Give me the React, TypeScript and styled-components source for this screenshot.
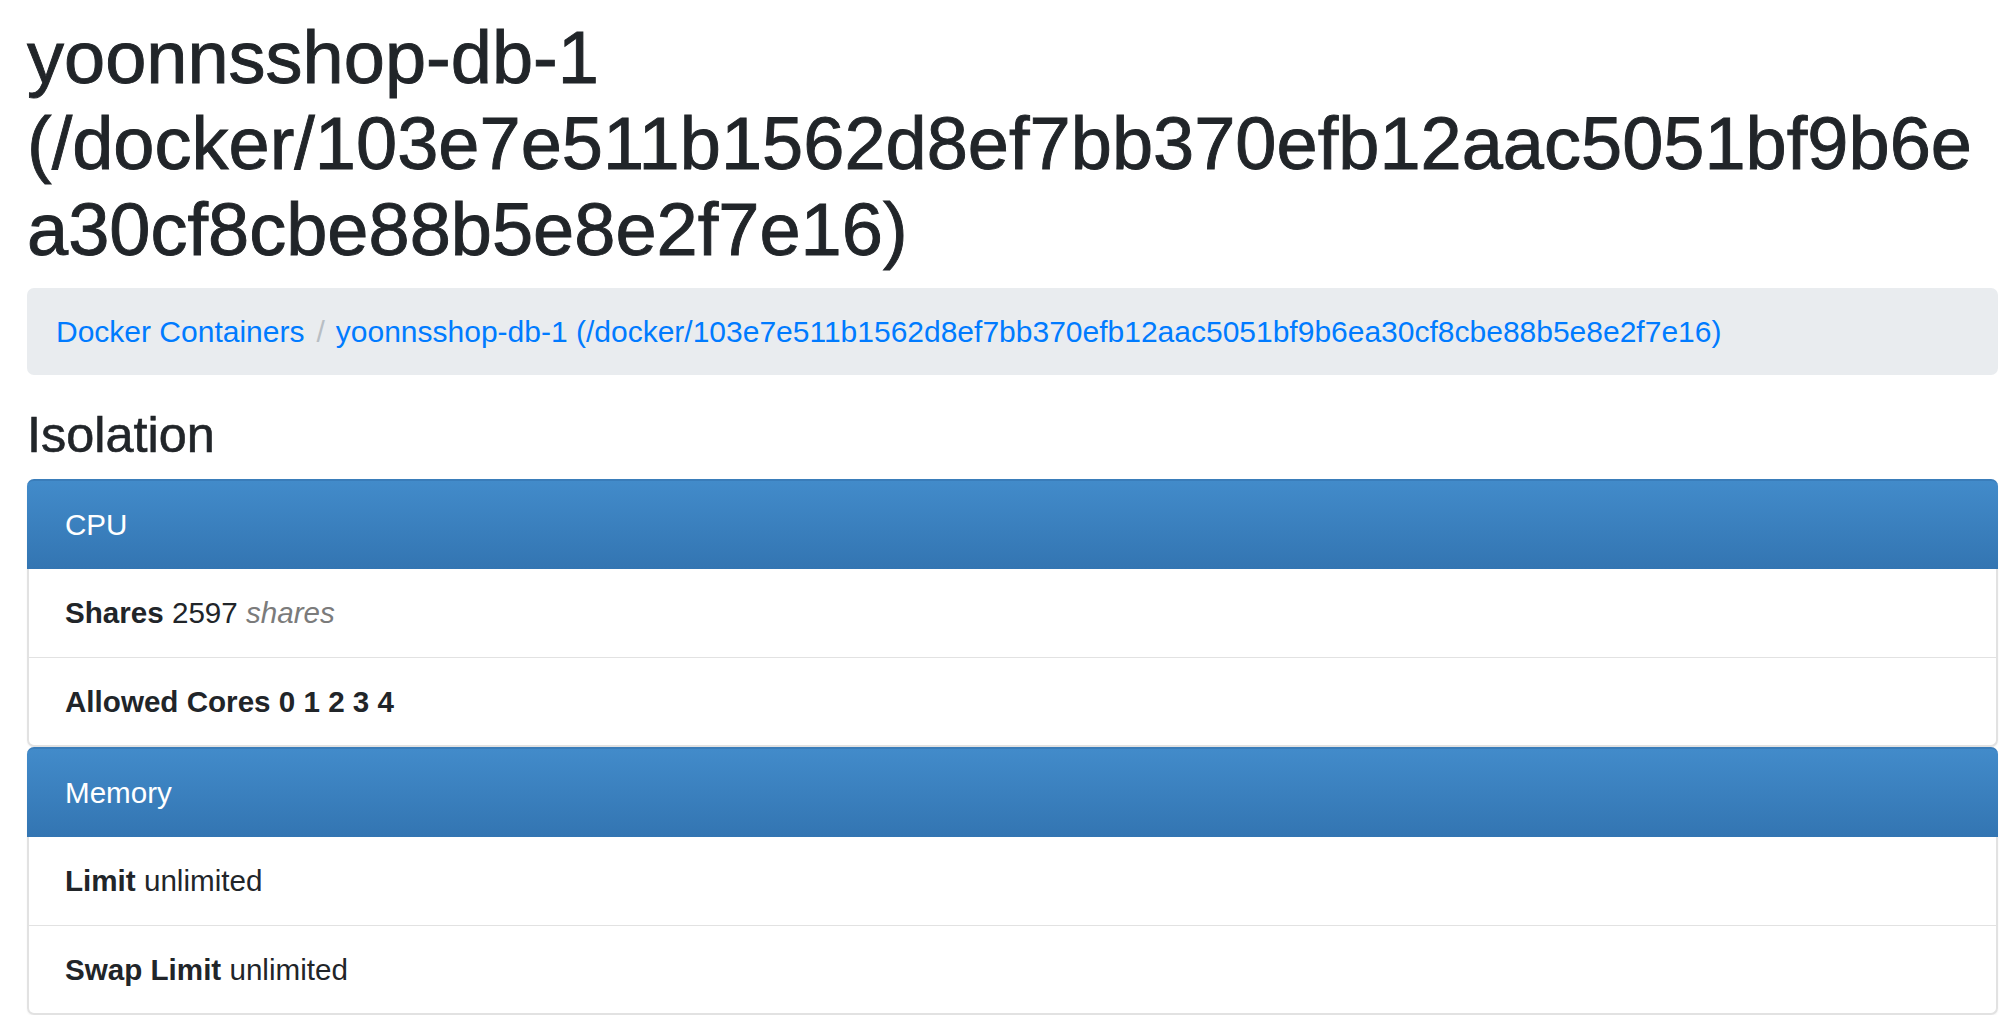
import React from "react";
import styled, { createGlobalStyle } from "styled-components";

const GlobalStyle = createGlobalStyle`
  html, body {
    margin: 0;
    padding: 0;
    background: #ffffff;
  }
  body {
    font-family: "Liberation Sans", Arial, Helvetica, sans-serif;
    color: #212529;
  }
  * { box-sizing: border-box; }
`;

const Page = styled.div`
  padding: 15px 2px 0 27px;
`;

const Title = styled.h1`
  margin: 0 0 15px;
  font-size: 74px;
  line-height: 86px;
  font-weight: 400;
  color: #212529;
  -webkit-text-stroke: 0.9px #212529;
  overflow-wrap: break-word;
  word-wrap: break-word;
`;

const Breadcrumb = styled.nav`
  display: flex;
  align-items: center;
  flex-wrap: wrap;
  background: #e9ecef;
  border-radius: 7px;
  padding: 22px 29px;
  margin: 0 0 29px;
  font-size: 30px;
  line-height: 43px;
`;

const Crumb = styled.a`
  color: #007bff;
  text-decoration: none;
`;

const Sep = styled.span`
  color: #b8bec4;
  padding: 0 11px 0 12px;
`;

const SectionTitle = styled.h3`
  margin: 0 0 14px;
  font-size: 50.4px;
  line-height: 61px;
  font-weight: 400;
  color: #212529;
  -webkit-text-stroke: 0.6px #212529;
`;

const Panel = styled.section`
  border-radius: 7px;
  box-shadow: 0 1px 2px rgba(0, 0, 0, 0.05);
`;

const PanelHeading = styled.div`
  background-image: linear-gradient(to bottom, #428bca 0%, #3375b2 100%);
  border-top: 2px solid #3a7dba;
  border-radius: 7px 7px 0 0;
  color: #ffffff;
  padding: 22px 38px;
  font-size: 29.6px;
  line-height: 44px;
`;

const List = styled.ul`
  list-style: none;
  margin: 0;
  padding: 0;
  border: 2px solid #e2e2e2;
  border-top: none;
  border-radius: 0 0 7px 7px;
  background: #ffffff;
`;

const Item = styled.li`
  padding: 22px 36px;
  font-size: 29.6px;
  line-height: 43.5px;
  color: #212529;
  & + & {
    border-top: 1.5px solid #e2e2e2;
  }
`;

const Label = styled.strong`
  font-weight: 700;
`;

const Unit = styled.em`
  color: #7b7b7b;
  font-style: italic;
`;

type Row = { label: string; value: string; unit?: string; boldValue?: boolean };

const sections: { title: string; rows: Row[] }[] = [
  {
    title: "CPU",
    rows: [
      { label: "Shares", value: "2597", unit: "shares" },
      { label: "Allowed Cores", value: "0 1 2 3 4", boldValue: true },
    ],
  },
  {
    title: "Memory",
    rows: [
      { label: "Limit", value: "unlimited" },
      { label: "Swap Limit", value: "unlimited" },
    ],
  },
];

const containerName =
  "yoonnsshop-db-1 (/docker/103e7e511b1562d8ef7bb370efb12aac5051bf9b6ea30cf8cbe88b5e8e2f7e16)";

export default function App() {
  return (
    <>
      <GlobalStyle />
      <Page>
        <Title>{containerName}</Title>
        <Breadcrumb>
          <Crumb href="#">Docker Containers</Crumb>
          <Sep>/</Sep>
          <Crumb href="#">{containerName}</Crumb>
        </Breadcrumb>
        <SectionTitle>Isolation</SectionTitle>
        {sections.map((s) => (
          <Panel key={s.title}>
            <PanelHeading>{s.title}</PanelHeading>
            <List>
              {s.rows.map((r) => (
                <Item key={r.label}>
                  <Label>{r.label}</Label>{" "}
                  {r.boldValue ? <Label>{r.value}</Label> : r.value}
                  {r.unit ? (
                    <>
                      {" "}
                      <Unit>{r.unit}</Unit>
                    </>
                  ) : null}
                </Item>
              ))}
            </List>
          </Panel>
        ))}
      </Page>
    </>
  );
}
